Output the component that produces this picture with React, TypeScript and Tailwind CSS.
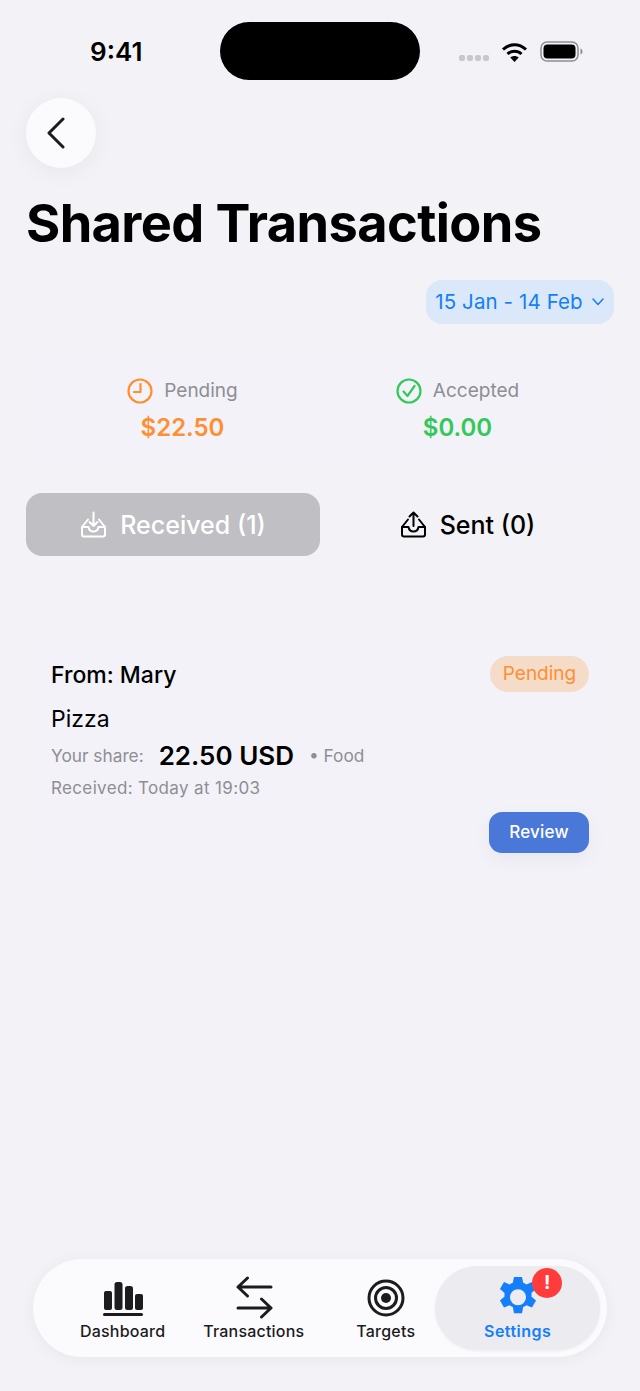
import React from "react";

const font = { fontFamily: "Inter, 'Liberation Sans', sans-serif" };

// Status bar glyphs
const WifiIcon = () => (
  <svg width="27" height="20" viewBox="0 0 27 20" fill="none" stroke="#000" strokeWidth="3" strokeLinecap="butt">
    <path d="M2 7.5C9 1 18 1 25 7.5" />
    <path d="M6.5 12C10.500 8.300 16.500 8.300 20.500 12" />
    <path d="M13.500 20L9.300 15.400C11.800 13.400 15.200 13.400 17.700 15.400Z" fill="#000" stroke="none" />
  </svg>
);

const BatteryIcon = () => (
  <svg width="43" height="21" viewBox="0 0 43 21" fill="none">
    <rect x="1" y="1" width="37" height="19" rx="6" stroke="#8e8e93" strokeWidth="1.500" />
    <rect x="3.500" y="3.500" width="32" height="14" rx="4" fill="#000" />
    <path d="M40.500 7.500C42 8 42.500 9.500 42.500 10.500C42.500 11.500 42 13 40.500 13.500Z" fill="#8e8e93" />
  </svg>
);

const InboxDown = ({ color }: { color: string }) => (
  <svg width="27" height="27" viewBox="0 0 27 27" fill="none" stroke={color} strokeWidth="2" strokeLinecap="round" strokeLinejoin="round">
    <path d="M8 8.500L2 16V23.500C2 24.600 2.900 25.500 4 25.500H23C24.100 25.500 25 24.600 25 23.500V16L19 8.500" />
    <path d="M2 16H8.500C9 19 11 20.500 13.500 20.500C16 20.500 18 19 18.500 16H25" />
    <path d="M13.500 1.500V15M9.500 11L13.500 15L17.500 11" />
  </svg>
);

const InboxUp = ({ color }: { color: string }) => (
  <svg width="27" height="27" viewBox="0 0 27 27" fill="none" stroke={color} strokeWidth="2" strokeLinecap="round" strokeLinejoin="round">
    <path d="M8 8.500L2 16V23.500C2 24.600 2.900 25.500 4 25.500H23C24.100 25.500 25 24.600 25 23.500V16L19 8.500" />
    <path d="M2 16H8.500C9 19 11 20.500 13.500 20.500C16 20.500 18 19 18.500 16H25" />
    <path d="M13.500 15V1.500M9.500 5.500L13.500 1.500L17.500 5.500" />
  </svg>
);

const DashboardIcon = () => (
  <svg width="42" height="36" viewBox="0 0 42 36" fill="#1c1c1e">
    <rect x="2" y="11" width="8" height="19" rx="2" />
    <rect x="12.500" y="2" width="8" height="28" rx="2.500" />
    <rect x="23" y="6" width="8" height="24" rx="2.500" />
    <rect x="33" y="14" width="8" height="16" rx="2" />
    <rect x="1" y="33" width="40" height="3" rx="1.500" />
  </svg>
);

const TransferIcon = () => (
  <svg width="38" height="44" viewBox="0 0 38 44" fill="none" stroke="#1c1c1e" strokeWidth="3" strokeLinecap="round" strokeLinejoin="round">
    <path d="M36 11H3M12.500 2L3 11L12.500 20" />
    <path d="M3 32H36M26.500 23L36 32L26.500 41" />
  </svg>
);

const TargetIcon = () => (
  <svg width="38" height="38" viewBox="0 0 38 38" fill="none" stroke="#1c1c1e">
    <circle cx="19" cy="19" r="17" strokeWidth="3" />
    <circle cx="19" cy="19" r="10.500" strokeWidth="3" />
    <circle cx="19" cy="19" r="5" fill="#1c1c1e" stroke="none" />
  </svg>
);

const GearIcon = () => (
  <svg width="46" height="46" viewBox="0 0 24 24" fill="#147efb">
    <path
      fillRule="evenodd"
      d="M9.900 1h4.200l.6 3.100c.6.200 1.200.500 1.700.800l2.900-1.200 2.100 3.600-2.400 2.100c.1.600.1 1.200 0 1.800l.1.100 2.300 2-2.100 3.600-2.900-1.100c-.5.400-1.100.700-1.700.900l-.6 3.200H9.900l-.6-3.200c-.6-.2-1.200-.5-1.700-.9l-2.900 1.100-2.100-3.600 2.400-2.100c-.1-.6-.1-1.200 0-1.800L2.600 7.300l2.100-3.600 2.900 1.200c.5-.3 1.100-.6 1.700-.8L9.900 1ZM12 7.400a4.200 4.200 0 1 0 0 8.400 4.200 4.200 0 0 0 0-8.400Z"
    />
  </svg>
);

const NavItem = ({ icon, label, active }: { icon: React.ReactNode; label: string; active?: boolean }) => (
  <div className="flex flex-col items-center">
    <div className="flex h-[46px] items-center justify-center">{icon}</div>
    <span
      className={`text-[16px] leading-[20px] ${
        active ? "font-semibold tracking-[0.45px] text-[#147efb]" : "font-medium tracking-[0.2px] text-[#1c1c1e]"
      }`}
    >
      {label}
    </span>
  </div>
);

export default function App() {
  return (
    <div className="flex min-h-[1391px] flex-col bg-[#f2f2f7] text-black" style={font}>
      {/* status bar */}
      <div className="flex h-[80px] items-start pt-[22px]">
        <span className="ml-[90px] mt-[15px] w-[130px] text-[26px] font-semibold leading-[30px]">9:41</span>
        <div className="h-[58px] w-[200px] rounded-[29px] bg-black" />
        <div className="ml-[39px] mt-[19px] flex items-center">
          <div className="mt-[13px] flex gap-[2px]">
            <span className="h-[6px] w-[6px] rounded-[2px] bg-[#c7c7cc]" />
            <span className="h-[6px] w-[6px] rounded-[2px] bg-[#c7c7cc]" />
            <span className="h-[6px] w-[6px] rounded-[2px] bg-[#c7c7cc]" />
            <span className="h-[6px] w-[6px] rounded-[2px] bg-[#c7c7cc]" />
          </div>
          <div className="ml-[12px]">
            <WifiIcon />
          </div>
          <div className="ml-[12px]">
            <BatteryIcon />
          </div>
        </div>
      </div>

      <div className="px-[26px]">
        <button className="mt-[18px] flex h-[70px] w-[70px] items-center justify-center rounded-full bg-[#fbfbfd] shadow-[0_4px_24px_rgba(0,0,0,0.05)]">
          <svg className="mr-[8px]" width="24" height="32" viewBox="0 0 24 32" fill="none" stroke="#1c1c1e" strokeWidth="3" strokeLinecap="round" strokeLinejoin="round">
            <path d="M18 2L4 16L18 30" />
          </svg>
        </button>

        <h1 className="mt-[23px] whitespace-nowrap text-[52.300px] font-bold leading-[64px] tracking-[-0.6px]">Shared Transactions</h1>

        {/* date range */}
        <div className="mt-[25px] flex justify-end">
          <div className="flex h-[44px] w-[188px] items-center justify-center gap-[8px] rounded-[16px] bg-[#dbe8f9] text-[#147efb]">
            <span className="text-[20.500px] leading-[24px] tracking-[0.1px]">15 Jan - 14 Feb</span>
            <svg width="14" height="10" viewBox="0 0 14 10" fill="none" stroke="#147efb" strokeWidth="1.500" strokeLinecap="round" strokeLinejoin="round">
              <path d="M2 2L7 7.500L12 2" />
            </svg>
          </div>
        </div>

        {/* totals */}
        <div className="mt-[21px] grid h-[126px] grid-cols-2 rounded-[20px] bg-[#f2f2f8] px-[19px] pt-[32px] shadow-[0_2px_10px_rgba(0,0,0,0.008)]">
          <div className="flex flex-col items-center">
            <div className="flex h-[28px] items-center gap-[11px]">
              <svg width="26" height="26" viewBox="0 0 26 26" fill="none" stroke="#ff8f33" strokeWidth="2.200" strokeLinecap="round" strokeLinejoin="round">
                <circle cx="13" cy="13" r="11.500" />
                <path d="M13.500 6V14H7" />
              </svg>
              <span className="text-[19px] leading-[24px] text-[#8e8e93]">Pending</span>
            </div>
            <span className="mt-[7px] text-[24px] font-semibold leading-[32px] text-[#ff8f33]">$22.50</span>
          </div>
          <div className="flex flex-col items-center">
            <div className="flex h-[28px] items-center gap-[11px]">
              <svg width="26" height="26" viewBox="0 0 26 26" fill="none" stroke="#34c759" strokeWidth="2.200" strokeLinecap="round" strokeLinejoin="round">
                <circle cx="13" cy="13" r="11.500" />
                <path d="M7.500 13.500L11.500 18L18.500 8" />
              </svg>
              <span className="text-[19px] leading-[24px] text-[#8e8e93]">Accepted</span>
            </div>
            <span className="mt-[7px] text-[24px] font-semibold leading-[32px] text-[#34c759]">$0.00</span>
          </div>
        </div>

        {/* tabs */}
        <div className="mt-[22px] grid h-[63px] grid-cols-2">
          <div className="flex items-center justify-center gap-[13px] rounded-[16px] bg-[#c0bfc4] text-white">
            <InboxDown color="#ffffff" />
            <span className="text-[25px] font-medium leading-[30px]">Received (1)</span>
          </div>
          <div className="ml-[-1px] flex items-center justify-center gap-[13px] pl-[2px] text-black">
            <InboxUp color="#000000" />
            <span className="text-[25px] font-medium leading-[30px]">Sent (0)</span>
          </div>
        </div>

        {/* shared transaction */}
        <div className="mt-[77px] h-[247px] rounded-[20px] bg-[#f2f2f8] px-[25px] pt-[23px] shadow-[0_2px_10px_rgba(0,0,0,0.008)]">
          <div className="flex h-[36px] items-center justify-between">
            <span className="pt-[2px] text-[23px] font-medium leading-[30px]">From: Mary</span>
            <span className="flex h-[36px] w-[99px] items-center justify-center rounded-full bg-[#f5dcc8] text-[19px] text-[#ff8f33]">Pending</span>
          </div>
          <div className="mt-[12px] text-[23px] leading-[30px]">Pizza</div>
          <div className="mt-[2px] flex h-[40px] items-center text-[#8e8e93]">
            <span className="text-[17.300px]">Your share:</span>
            <span className="ml-[15px] text-[26px] font-semibold leading-[32px] text-black">22.50 USD</span>
            <span className="ml-[15px] text-[17.300px]">• Food</span>
          </div>
          <div className="text-[17px] leading-[24px] tracking-[0.35px] text-[#8e8e93]">Received: Today at 19:03</div>
          <div className="mt-[12px] flex justify-end">
            <button className="flex h-[41px] w-[100px] items-center justify-center rounded-[13px] bg-[#4a78d9] text-[17px] font-medium tracking-[0.2px] text-white shadow-[0_6px_20px_rgba(0,0,0,0.05)]">
              Review
            </button>
          </div>
        </div>
      </div>

      {/* tab bar */}
      <div className="mx-[33px] mb-[34px] mt-auto flex h-[98px] items-center rounded-[49px] bg-[#fbfbfd] pl-[47px] pr-[7px] shadow-[0_2px_16px_rgba(0,0,0,0.05)]">
        <NavItem icon={<DashboardIcon />} label="Dashboard" />
        <div className="ml-[38px]">
          <NavItem icon={<TransferIcon />} label="Transactions" />
        </div>
        <div className="ml-[52px]">
          <NavItem icon={<TargetIcon />} label="Targets" />
        </div>
        <div className="relative ml-[20px] flex h-[84px] w-[165px] items-center justify-center rounded-[42px] bg-[#ebebf0] shadow-[0_1px_3px_rgba(0,0,0,0.06)]">
          <NavItem icon={<GearIcon />} label="Settings" active />
          <span className="absolute left-[97px] top-[2px] flex h-[30px] w-[30px] items-center justify-center rounded-full bg-[#ff3b3b] text-[19px] font-bold text-white">!</span>
        </div>
      </div>
    </div>
  );
}
